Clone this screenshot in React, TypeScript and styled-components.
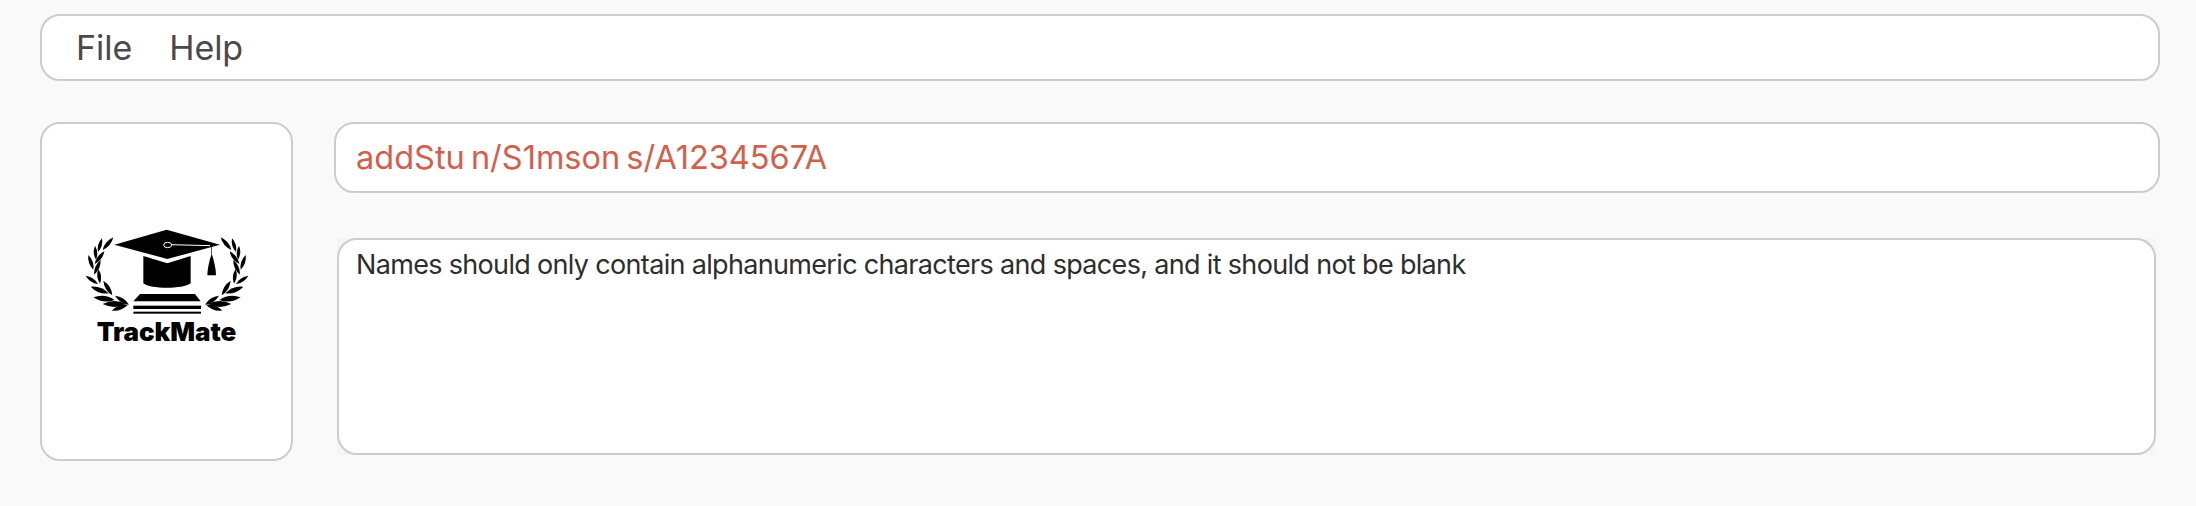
import { createGlobalStyle, styled } from "styled-components";

const GlobalStyle = createGlobalStyle`
  html, body {
    margin: 0;
    background: #f9f9f9;
  }
`;

const Page = styled.div`
  width: 2196px;
  height: 506px;
  box-sizing: border-box;
  padding: 14px 36px 0 40px;
  display: flex;
  flex-direction: column;
  gap: 41px;
  font-family: Inter, "Liberation Sans", sans-serif;
`;

const Panel = styled.div`
  box-sizing: border-box;
  background: #ffffff;
  border: 2px solid #cccccc;
  border-radius: 20px;
`;

const MenuBar = styled(Panel)`
  height: 67px;
  padding: 0 34px;
  display: flex;
  align-items: center;
  gap: 37px;
`;

const MenuItem = styled.span`
  font-size: 34px;
  letter-spacing: -0.05px;
  color: #4a4a4a;
`;

const Main = styled.div`
  display: flex;
  gap: 41px;
`;

const LogoCard = styled(Panel)`
  width: 253px;
  height: 339px;
  display: flex;
  flex-direction: column;
  align-items: center;
  justify-content: center;
  padding-bottom: 25px;
`;

const LogoName = styled.span`
  font-size: 26px;
  line-height: 26px;
  font-weight: 900;
  letter-spacing: -0.1px;
  color: #000000;
`;

const Side = styled.div`
  flex: 1;
  display: flex;
  flex-direction: column;
  gap: 45px;
`;

const CommandBox = styled(Panel)`
  height: 71px;
  padding: 0 20px;
  display: flex;
  align-items: center;
  font-size: 32.5px;
  word-spacing: -3px;
  color: #d1604d;
`;

const ResultFrame = styled.div`
  margin: 0 4px 0 3px;
  background: #f5f5f5;
`;

const ResultBox = styled(Panel)`
  height: 217px;
  padding: 7px 17px;
  font-size: 27px;
  line-height: 36px;
  letter-spacing: -0.67px;
  color: #2e2e2e;
`;

const LogoSvg = styled.svg`
  margin-right: 3px;
`;

// tip and base of each laurel leaf, left branch, in logo units
const leaves: [number, number, number, number][] = [
  [130, 70, 98, 108],
  [96, 73, 84, 114],
  [75, 95, 78, 137],
  [103, 112, 74, 150],
  [55, 123, 70, 167],
  [92, 138, 72, 182],
  [47, 185, 84, 210],
  [85, 165, 90, 209],
  [62, 218, 116, 238],
  [100, 200, 127, 244],
  [70, 250, 134, 258],
  [98, 270, 168, 270],
  [135, 245, 177, 272],
  [125, 290, 174, 272],
];

const Leaf = ({ from, to }: { from: [number, number]; to: [number, number] }) => {
  const dx = to[0] - from[0];
  const dy = to[1] - from[1];
  const mx = from[0] + dx * 0.5;
  const my = from[1] + dy * 0.5;
  const nx = -dy * 0.25;
  const ny = dx * 0.25;
  return (
    <path
      d={`M${from[0]} ${from[1]}Q${mx + nx} ${my + ny} ${to[0]} ${to[1]}Q${mx - nx} ${my - ny} ${from[0]} ${from[1]}Z`}
    />
  );
};

const Wreath = () => (
  <g>
    {leaves.map(([x1, y1, x2, y2]) => (
      <Leaf key={`${x1}-${y1}`} from={[x1, y1]} to={[x2, y2]} />
    ))}
  </g>
);

const LogoMark = () => (
  <LogoSvg width="190" height="105" viewBox="0 0 570 315" fill="#000000">
    <Wreath />
    <g transform="translate(582 0) scale(-1 1)">
      <Wreath />
    </g>
    <path d="M133 92L290 47L450 92L292 135Z" />
    <path d="M220 126L292 148L362 126V208C340 226 240 226 220 208Z" />
    <path d="M300 92L420 95" stroke="#ffffff" strokeWidth="3" />
    <ellipse cx="293" cy="93" rx="12" ry="8" fill="#000000" stroke="#ffffff" strokeWidth="3" />
    <path d="M426 96V122C432 140 438 165 438 184H412C412 165 418 140 424 122V96Z" />
    <path d="M210 240H375L392 262H190Z" />
    <rect x="190" y="275" width="203" height="10" />
    <rect x="190" y="293" width="203" height="6" />
  </LogoSvg>
);

export default function App() {
  return (
    <Page>
      <GlobalStyle />
      <MenuBar>
        <MenuItem>File</MenuItem>
        <MenuItem>Help</MenuItem>
      </MenuBar>
      <Main>
        <LogoCard>
          <LogoMark />
          <LogoName>TrackMate</LogoName>
        </LogoCard>
        <Side>
          <CommandBox>addStu n/S1mson s/A1234567A</CommandBox>
          <ResultFrame>
            <ResultBox>Names should only contain alphanumeric characters and spaces, and it should not be blank</ResultBox>
          </ResultFrame>
        </Side>
      </Main>
    </Page>
  );
}
